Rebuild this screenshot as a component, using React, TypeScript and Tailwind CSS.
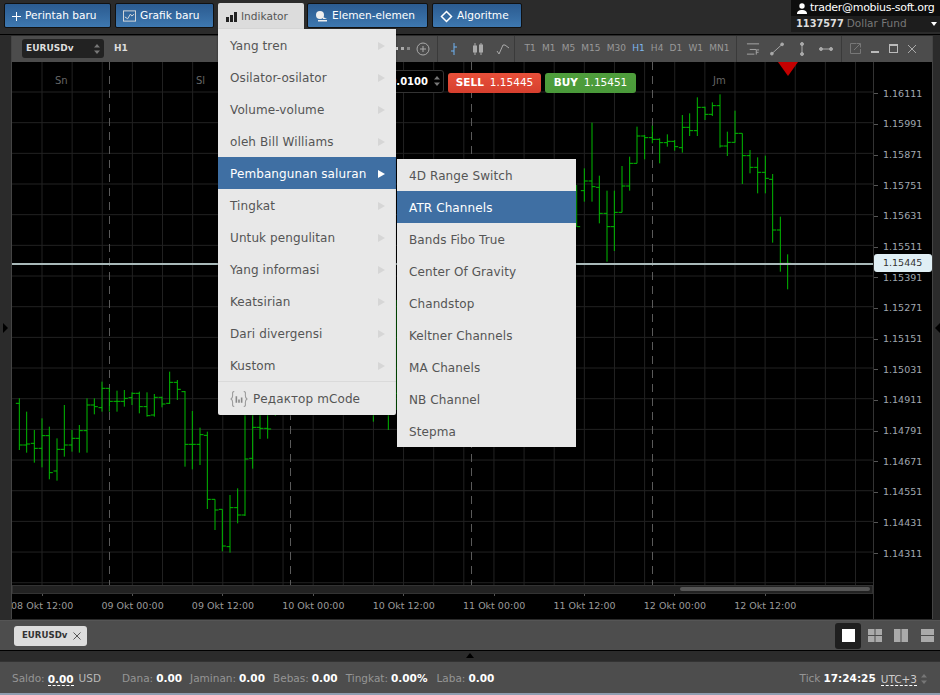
import type { ReactNode } from "react";

const FONT = "font-['DejaVu_Sans',sans-serif]";

// bars read off the chart: [x, high, low, open, close]
const LEFT_BARS = [
  [58, 115, 270, 130, 255], [80, 155, 278, 255, 252], [103, 210, 308, 250, 265], [126, 175, 322, 265, 227],
  [148, 200, 358, 227, 338], [171, 235, 362, 333, 268], [193, 135, 290, 268, 255], [216, 210, 275, 255, 235],
  [238, 195, 278, 235, 212], [261, 115, 278, 212, 135], [283, 115, 163, 135, 140], [306, 65, 155, 143, 85],
  [328, 85, 155, 85, 124], [351, 92, 155, 124, 124], [373, 90, 140, 124, 115], [396, 97, 135, 113, 100],
  [418, 95, 160, 100, 140], [441, 97, 170, 140, 167], [463, 102, 170, 165, 112], [486, 110, 142, 112, 132],
  [509, 35, 132, 130, 67], [532, 60, 120, 67, 88], [555, 93, 320, 95, 253], [577, 153, 328, 253, 253],
  [600, 203, 315, 253, 224], [622, 215, 447, 226, 418], [645, 418, 510, 418, 450], [667, 448, 574, 448, 558],
  [690, 405, 578, 560, 443], [713, 385, 490, 443, 465], [735, 160, 468, 465, 297], [758, 165, 326, 295, 202],
  [780, 165, 237, 202, 205], [803, 165, 236, 205, 207], [826, 100, 168, 110, 110],
  [1120, 60, 185, 120, 120], [1165, 30, 210, 120, 120], [1188, -180, 150, 100, 100],
];

const RIGHT_BARS = [
  [20, 315, 440, 332, 440], [43, 265, 365, 332, 303], [66, 128, 365, 303, 320], [88, 287, 430, 322, 400],
  [111, 332, 545, 400, 440], [133, 332, 513, 440, 397], [156, 258, 397, 397, 318], [179, 230, 332, 318, 250],
  [201, 140, 250, 250, 168], [224, 165, 238, 168, 173], [247, 137, 190, 173, 178], [269, 175, 250, 178, 188],
  [292, 163, 200, 188, 184], [314, 180, 212, 184, 200], [337, 105, 218, 203, 142], [359, 100, 168, 142, 152],
  [382, 52, 168, 152, 82], [405, 80, 120, 82, 103], [427, 67, 108, 103, 77], [450, 43, 203, 77, 198],
  [472, 155, 228, 198, 187], [495, 92, 188, 187, 160], [517, 160, 312, 160, 227], [540, 210, 280, 227, 262],
  [563, 232, 340, 262, 277], [586, 227, 340, 277, 295], [608, 282, 488, 298, 450], [631, 410, 575, 450, 550],
  [653, 523, 628, 550, 550],
];

const PRICES = ["1.16111", "1.15991", "1.15871", "1.15751", "1.15631", "1.15511", "1.15391", "1.15271", "1.15151", "1.15031", "1.14911", "1.14791", "1.14671", "1.14551", "1.14431", "1.14311"];
const DATES = ["08 Okt 12:00", "09 Okt 00:00", "09 Okt 12:00", "10 Okt 00:00", "10 Okt 12:00", "11 Okt 00:00", "11 Okt 12:00", "12 Okt 00:00", "12 Okt 12:00"];
const TIMEFRAMES = ["T1", "M1", "M5", "M15", "M30", "H1", "H4", "D1", "W1", "MN1"];
const MENU = ["Yang tren", "Osilator-osilator", "Volume-volume", "oleh Bill Williams", "Pembangunan saluran", "Tingkat", "Untuk pengulitan", "Yang informasi", "Keatsirian", "Dari divergensi", "Kustom"];
const SUBMENU = ["4D Range Switch", "ATR Channels", "Bands Fibo True", "Center Of Gravity", "Chandstop", "Keltner Channels", "MA Chanels", "NB Channel", "Stepma"];

function Bar({ x, high, low, open, close }: { x: number; high: number; low: number; open: number; close: number }) {
  return (
    <g stroke="#00bb00" strokeWidth="1">
      <line x1={x} x2={x} y1={high} y2={low} />
      <line x1={x - 3.5} x2={x} y1={open} y2={open} />
      <line x1={x} x2={x + 3.5} y1={close} y2={close} />
    </g>
  );
}

function Chart() {
  const hLines = Array.from({ length: 17 }, (_, i) => 92 + 30.67 * i);
  const vLines = Array.from({ length: 28 }, (_, i) => 42 + 30.13 * i);
  return (
    <svg viewBox="12 62 861 523" className="block h-[523px] w-[861px]">
      {hLines.map((y) => <line key={y} x1="12" x2="873" y1={y} y2={y} stroke="#222" />)}
      {vLines.map((x) => <line key={x} x1={x} x2={x} y1="62" y2="585" stroke="#222" />)}
      {[109.5, 290.5, 471.5, 652.5].map((x) => (
        <line key={x} x1={x} x2={x} y1="62" y2="585" stroke="#5a5a5a" strokeDasharray="8 6" />
      ))}
      <text x="55" y="84" fontSize="10" fill="#666" fontFamily="DejaVu Sans">Sn</text>
      <text x="196" y="84" fontSize="10" fill="#666" fontFamily="DejaVu Sans">Sl</text>
      <text x="713" y="84" fontSize="10" fill="#666" fontFamily="DejaVu Sans">Jm</text>
      {LEFT_BARS.map(([x, h, l, o, c]) => (
        <Bar key={x} x={x / 3} high={360 + h / 3} low={360 + l / 3} open={360 + o / 3} close={360 + c / 3} />
      ))}
      {RIGHT_BARS.map(([x, h, l, o, c]) => (
        <Bar key={x} x={570 + x / 3} high={80 + h / 3} low={80 + l / 3} open={80 + o / 3} close={80 + c / 3} />
      ))}
      <line x1="12" x2="873" y1="264" y2="264" stroke="#a9b9b9" strokeWidth="2" />
      <polygon points="778,62 798,62 788,76" fill="#c40000" />
    </svg>
  );
}

function NavButton({ icon, label, className }: { icon: ReactNode; label: string; className: string }) {
  return (
    <button className={"flex h-[25px] items-center gap-[4px] rounded-[2px] border border-[#111] bg-gradient-to-b from-[#2b5b90] to-[#3e78b0] pl-[7px] pt-px text-[10.6px] text-white " + className}>
      {icon}
      <span>{label}</span>
    </button>
  );
}

function Arrows() {
  return (
    <svg width="6" height="12" viewBox="0 0 6 12" fill="#777">
      <path d="M3 1 6 4.5H0zM3 11 0 7.5h6z" />
    </svg>
  );
}

function StatLabel({ label, value, className = "" }: { label: string; value: string; className?: string }) {
  return (
    <span className={"flex items-baseline gap-[3px] " + className}>
      <span className="text-[#959595]">{label}</span>
      <b className="font-bold text-white">{value}</b>
    </span>
  );
}

function Toolbar() {
  return (
    <div className="flex h-[26px] bg-[#4c4c4c] text-[#aaa]">
      <div className="relative flex w-[426px] items-center border-r border-[#3a3a3a] pl-[10px]">
        <div className="flex h-[19px] w-[82px] items-center justify-between rounded-[3px] bg-[#222] pl-[4px] pr-[4px] text-[9px] font-bold text-[#ddd]">
          EURUSDv
          <Arrows />
        </div>
        <span className="ml-[10px] text-[9px] font-bold text-[#ddd]">H1</span>
        <div className="ml-auto mr-[7px] flex items-center gap-[3px]">
          <i className="h-[3px] w-[3px] bg-[#ddd]" />
          <i className="h-[3px] w-[3px] bg-[#aaa]" />
          <i className="h-[3px] w-[3px] bg-[#888]" />
          <svg width="14" height="14" viewBox="0 0 14 14" fill="none" stroke="#aaa" className="ml-[3px]">
            <circle cx="7" cy="7" r="6" />
            <path d="M7 4v6M4 7h6" />
          </svg>
        </div>
      </div>
      <div className="flex w-[77px] items-center justify-center gap-[12px] border-r border-[#3a3a3a] pl-[6px]">
        <svg width="12" height="14" viewBox="0 0 12 14" fill="none" stroke="#6fb2f2">
          <path d="M6 1v12M3 9h3M6 5h3" />
        </svg>
        <svg width="12" height="14" viewBox="0 0 12 14" fill="#aaa" stroke="#aaa">
          <path d="M3 1v12M9 1v12" />
          <rect x="1.5" y="4" width="3" height="6" />
          <rect x="7.5" y="3" width="3" height="7" />
        </svg>
        <svg width="14" height="14" viewBox="0 0 14 14" fill="none" stroke="#aaa">
          <path d="M1 9l2 3 4-9h2l4 3" />
        </svg>
      </div>
      <div className="flex w-[222px] items-center justify-center gap-[6.2px] border-r border-[#3a3a3a] pl-[3px] text-[9px] text-[#999]">
        {TIMEFRAMES.map((t) => (
          <span key={t} className={t === "H1" ? "text-[#7db6ec]" : ""}>{t}</span>
        ))}
      </div>
      <div className="flex w-[105px] items-center border-r border-[#3a3a3a] pl-[9px]">
        <svg width="14" height="14" viewBox="0 0 15 14" fill="none" stroke="#aaa">
          <path d="M1 1.5h13M4 7.5h7M1 12.5h8" />
          <path d="M11 13V8h3M11 10.5h2.5" />
        </svg>
        <svg width="14" height="14" viewBox="0 0 15 14" fill="#aaa" stroke="#aaa" className="ml-[10px]">
          <path d="M2 12 13 2" />
          <circle cx="2" cy="12" r="1.5" />
          <circle cx="13" cy="2" r="1.5" />
        </svg>
        <svg width="8" height="14" viewBox="0 0 8 14" fill="#aaa" stroke="#aaa" className="ml-[14px]">
          <path d="M4 2v10" />
          <circle cx="4" cy="2" r="1.5" />
          <circle cx="4" cy="12" r="1.5" />
        </svg>
        <svg width="14" height="8" viewBox="0 0 14 8" fill="#aaa" stroke="#aaa" className="ml-[13px]">
          <path d="M2 4h10" />
          <circle cx="2" cy="4" r="1.5" />
          <circle cx="12" cy="4" r="1.5" />
        </svg>
      </div>
      <div className="flex flex-1 items-center pl-[8px]">
        <svg width="11" height="11" viewBox="0 0 11 11" fill="none" stroke="#777">
          <path d="M6 .5H.5v10h10V6M4 7l6-6M6.5.5h4v4" />
        </svg>
        <i className="ml-[10px] mt-[6px] h-[2px] w-[8px] bg-[#bbb]" />
        <i className="ml-[10px] h-[9px] w-[9px] border border-t-2 border-[#bbb]" />
        <svg width="10" height="10" viewBox="0 0 10 10" stroke="#aaa" className="ml-[9px]">
          <path d="M1 1l8 8M9 1l-8 8" />
        </svg>
      </div>
    </div>
  );
}

function DropdownMenu() {
  return (
    <div className="absolute left-[218px] top-[29px] z-20 w-[178px] rounded-b-[2px] bg-[#e8e8e8] text-[12px] tracking-[0.1px] text-[#555] shadow-[0_1px_2px_rgba(0,0,0,0.5)]">
      {MENU.map((item) => {
        const active = item === "Pembangunan saluran";
        return (
          <div key={item} className={"flex h-[32px] items-center justify-between pl-[12px] pr-[11px] pt-[2px] " + (active ? "bg-[#3f6fa3] text-white" : "")}>
            <span>{item}</span>
            <span className={"h-0 w-0 border-y-[4px] border-l-[7px] border-y-transparent " + (active ? "border-l-white" : "border-l-[#d6d6d6]")} />
          </div>
        );
      })}
      <div className="flex h-[34px] items-center gap-[5px] border-t border-[#dadada] pl-[12px]">
        <svg width="18" height="18" viewBox="0 0 17 17" fill="none" stroke="#999">
          <path d="M4 1.5C2 1.5 2.5 3 2.5 5S2 8 1 8.5C2 9 2.5 10 2.5 12s-.5 3.5 1.5 3.5M13 1.5c2 0 1.5 1.5 1.5 3.5s.5 3 1.5 3.5c-1 .5-1.5 1.5-1.5 3.5s.5 3.5-1.5 3.5" />
          <path d="M6 6v6M8.5 9v3M11 7v5" stroke="#888" strokeWidth="1.5" />
        </svg>
        <span>Редактор mCode</span>
      </div>
    </div>
  );
}

function SubMenu() {
  return (
    <div className="absolute left-[397px] top-[159px] z-20 w-[179px] bg-[#e8e8e8] text-[12px] tracking-[0.1px] text-[#555] shadow-[0_0_2px_rgba(0,0,0,0.6)]">
      {SUBMENU.map((item) => (
        <div key={item} className={"flex h-[32px] items-center pl-[12px] pt-[2px] " + (item === "ATR Channels" ? "bg-[#3f6fa3] text-white" : "")}>
          {item}
        </div>
      ))}
    </div>
  );
}

export default function App() {
  return (
    <div className={"relative flex h-[695px] w-[940px] flex-col overflow-hidden bg-[#2b2b2b] " + FONT}>
      {/* Top bar */}
      <div className="flex h-[35px] border-b border-black">
        <div className="flex gap-[4px] pl-[4px] pt-[3px]">
          <NavButton
            label="Perintah baru"
            className="w-[107px]"
            icon={<svg width="9" height="9" viewBox="0 0 9 9" stroke="#fff"><path d="M4.5 0v9M0 4.5h9" /></svg>}
          />
          <NavButton
            label="Grafik baru"
            className="w-[99px]"
            icon={<svg width="13" height="12" viewBox="0 0 14 12" fill="none" stroke="#ddd"><rect x=".5" y=".5" width="13" height="11" /><path d="M2 7l3 2 3-5 1.5 2 2.5-2" /></svg>}
          />
          <button className="flex h-[26px] w-[86px] items-center gap-[4px] rounded-t-[2px] bg-[#dcdcdc] pl-[8px] pt-px text-[10.6px] text-[#555]">
            <svg width="11" height="10" viewBox="0 0 11 10" fill="#222"><path d="M0 5h3v5H0zM4 3h3v7H4zM8 0h3v10H8z" /></svg>
            Indikator
          </button>
          <NavButton
            label="Elemen-elemen"
            className="ml-[-1px] w-[121px]"
            icon={<svg width="13" height="12" viewBox="0 0 13 12" fill="#eee"><circle cx="5" cy="5" r="4" /><path d="M3 10h9v1.5H3z" /><path d="M8 7l4 2H8z" /></svg>}
          />
          <NavButton
            label="Algoritme"
            className="w-[90px]"
            icon={<svg width="13" height="13" viewBox="0 0 13 13" fill="none" stroke="#fff" strokeWidth="1.5"><path d="M6.5 1.5l5 5-5 5-5-5z" /></svg>}
          />
        </div>
        <div className="ml-auto flex h-[32px] w-[149px] flex-col">
          <div className="flex h-[16px] items-center gap-[3px] bg-[#0d0d0d] pl-[6px] text-[11px] text-white">
            <svg width="10" height="11" viewBox="0 0 10 11" fill="#fff"><circle cx="5" cy="3" r="2.7" /><path d="M0 11c0-3 2-4 5-4s5 1 5 4z" /></svg>
            <span className="tracking-[-0.3px]">trader@mobius-soft.org</span>
          </div>
          <div className="flex h-[16px] items-center bg-[#1d1d1d] pl-[5px] pr-[3px]">
            <b className="text-[9.8px] text-[#ddd]">1137577</b>
            <span className="ml-[3px] text-[10.5px] text-[#777]">Dollar Fund</span>
            <span className="ml-auto h-0 w-0 border-x-[3px] border-t-[4px] border-x-transparent border-t-white" />
          </div>
        </div>
      </div>

      {/* Chart window */}
      <div className="mt-px flex h-[584px]">
        <div className="flex w-[12px] items-center justify-start border-r border-[#444] bg-[#2b2b2b] pl-[3px]">
          <span className="h-0 w-0 border-y-[5px] border-l-[5px] border-y-transparent border-l-black" />
        </div>
        <div className="flex w-[920px] flex-col">
          <Toolbar />
          <div className="relative flex flex-1 bg-black">
            <div className="w-[861px] overflow-hidden">
              <Chart />
              <div className="flex h-[9px] items-center justify-end border border-[#333] bg-[#222] pr-[2px]">
                <div className="h-[4px] w-[190px] rounded-sm bg-[#555]" />
              </div>
              <div className="ml-[-15px] flex text-[9.5px] text-[#9a9a9a]">
                {DATES.map((d) => (
                  <div key={d} className="flex w-[90.4px] shrink-0 flex-col items-center">
                    <i className="h-[2px] w-px bg-[#555]" />
                    <span className="mt-[3px] whitespace-nowrap">{d}</span>
                  </div>
                ))}
              </div>
            </div>
            <div className="relative flex-1 border-l border-[#333] pt-[16.5px] text-[9.5px] text-[#a0a8b0]">
              {PRICES.map((p) => (
                <div key={p} className="flex h-[30.67px] items-center gap-[5px]">
                  <i className="h-px w-[4px] bg-[#555]" />
                  <span>{p}</span>
                </div>
              ))}
              <div className="absolute left-0 top-[192px] flex h-[18px] w-[58px] items-center rounded-[3px] bg-[#e0eff5] pl-[9px] text-[#333]">
                1.15445
              </div>
            </div>
            {/* Order controls over the chart */}
            <div className="absolute left-[376px] top-[8px] flex h-[23px] w-[56px] items-center justify-end gap-[6px] rounded-[3px] border border-[#333] bg-black pr-[3px] text-[10px] font-bold text-white">
              <span>0.0100</span>
              <Arrows />
            </div>
            <button className="absolute left-[436px] top-[11px] flex h-[20px] w-[93px] items-center justify-center gap-[6px] rounded-[3px] bg-gradient-to-b from-[#e8503a] to-[#d63f2e] text-[10.5px] text-white">
              <b>SELL</b> 1.15445
            </button>
            <button className="absolute left-[533px] top-[11px] flex h-[20px] w-[91px] items-center justify-center gap-[6px] rounded-[3px] bg-gradient-to-b from-[#4f9e3c] to-[#4a9a3a] text-[10.5px] text-white">
              <b>BUY</b> 1.15451
            </button>
          </div>
        </div>
        <div className="flex flex-1 items-center justify-end border-l border-[#444]">
          <span className="h-0 w-0 border-y-[5px] border-r-[5px] border-y-transparent border-r-black" />
        </div>
      </div>

      {/* Tabs */}
      <div className="mt-px flex h-[30px] items-center justify-between border-t border-[#555] bg-[#4d4d4d] pl-[14px] pr-[6px]">
        <div className="flex h-[20px] w-[73px] items-center gap-[6px] rounded-[3px] bg-[#dcdcdc] pl-[8px] text-[8.6px] font-bold text-[#333]">
          EURUSDv
          <svg width="8" height="8" viewBox="0 0 8 8" stroke="#555"><path d="M.5.5l7 7M7.5.5l-7 7" /></svg>
        </div>
        <div className="flex items-center">
          <div className="flex h-[26px] w-[26px] items-center justify-center rounded-[3px] bg-[#1f1f1f]">
            <i className="h-[13px] w-[13px] bg-white" />
          </div>
          <svg width="14" height="13" viewBox="0 0 14 13" fill="#aaa" className="ml-[7px]"><path d="M0 0h6.5v6H0zM7.5 0H14v6H7.5zM0 7h6.5v6H0zM7.5 7H14v6H7.5z" /></svg>
          <svg width="14" height="13" viewBox="0 0 14 13" fill="#aaa" className="ml-[12px]"><path d="M0 0h6.5v13H0zM7.5 0H14v13H7.5z" /></svg>
          <svg width="13" height="13" viewBox="0 0 13 13" fill="#aaa" className="ml-[13px]"><path d="M0 0h13v6H0zM0 7h13v6H0z" /></svg>
        </div>
      </div>

      {/* Divider */}
      <div className="flex h-[11px] items-start justify-center border-t border-black bg-[#2b2b2b] pt-[2px]">
        <span className="h-0 w-0 border-x-[4px] border-b-[5px] border-x-transparent border-b-black" />
      </div>

      {/* Status bar */}
      <div className="flex h-[32px] items-center border-t border-[#333] bg-[#4d4d4d] pl-[12px] pr-[13px] pt-[3px] text-[10.5px]">
        <span className="text-[#959595]">Saldo:</span>
        <b className="ml-[3px] border-b border-dashed border-white leading-[12px] text-white">0.00</b>
        <span className="ml-[5px] text-[#bbb]">USD</span>
        <StatLabel className="ml-[21px]" label="Dana:" value="0.00" />
        <StatLabel className="ml-[8px]" label="Jaminan:" value="0.00" />
        <StatLabel className="ml-[8px]" label="Bebas:" value="0.00" />
        <StatLabel className="ml-[8px]" label="Tingkat:" value="0.00%" />
        <StatLabel className="ml-[9px]" label="Laba:" value="0.00" />
        <StatLabel className="ml-auto" label="Tick" value="17:24:25" />
        <span className="ml-[5px] border-b border-dashed border-white leading-[12px] text-[#ccc]">UTC+3</span>
        <span className="ml-[4px]"><Arrows /></span>
      </div>
      <div className="h-[2px] bg-[#8f9db0]" />

      <DropdownMenu />
      <SubMenu />
    </div>
  );
}
